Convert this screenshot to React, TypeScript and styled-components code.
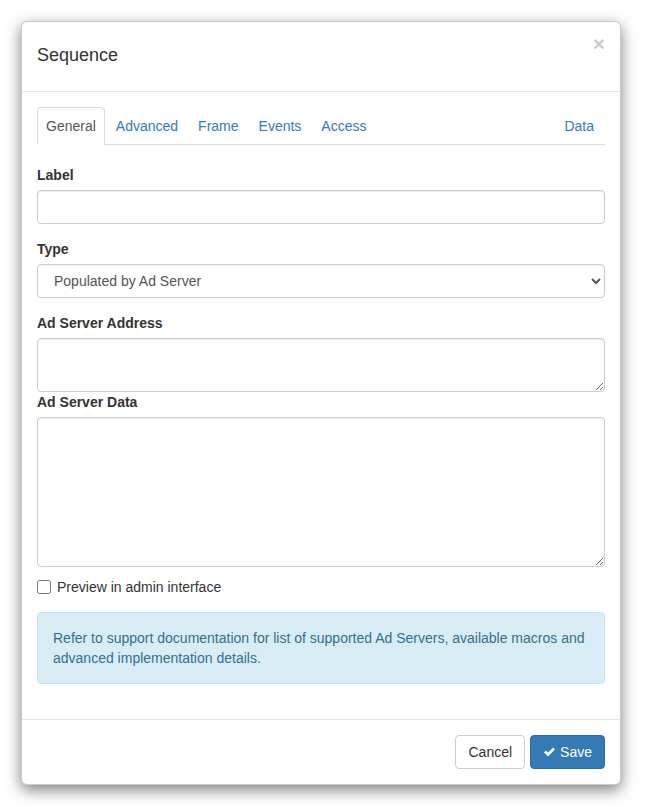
import React, { FC, useState } from "react";
import styled, { createGlobalStyle } from "styled-components";

const GlobalStyle = createGlobalStyle`
  html, body {
    margin: 0;
    padding: 0;
    background: #fff;
  }
  body {
    font-family: "Liberation Sans", Arial, Helvetica, sans-serif;
    font-size: 14px;
    line-height: 20px;
    color: #333;
  }
  * {
    box-sizing: border-box;
  }
`;

const Page = styled.div`
  padding: 21px 27px 26px 21px;
`;

const Modal = styled.div`
  width: 600px;
  background: #fff;
  border: 1px solid rgba(0, 0, 0, 0.2);
  border-radius: 6px;
  box-shadow: 0 5px 15px rgba(0, 0, 0, 0.5);
`;

const Header = styled.div`
  display: flex;
  align-items: flex-start;
  padding: 20px 15px 23px;
  border-bottom: 1px solid #e5e5e5;
`;

const Title = styled.h4`
  flex: 1;
  margin: 0;
  font-size: 18px;
  line-height: 26px;
  font-weight: 500;
  color: #333;
`;

const Close = styled.button`
  margin-top: -9px;
  padding: 0;
  border: 0;
  background: transparent;
  font-family: inherit;
  font-size: 21px;
  font-weight: bold;
  line-height: 1;
  color: #000;
  opacity: 0.2;
  text-shadow: 0 1px 0 #fff;
  cursor: pointer;
`;

const Body = styled.div`
  padding: 15px;
`;

const Tabs = styled.ul`
  display: flex;
  margin: 0 0 20px;
  padding: 0;
  list-style: none;
  border-bottom: 1px solid #ddd;
`;

const Tab = styled.li<{ $active?: boolean; $pushRight?: boolean }>`
  margin: 0 2px -1px 0;
  margin-left: ${(p) => (p.$pushRight ? "auto" : "0")};
  padding: 8px 8px;
  line-height: 20px;
  border: 1px solid ${(p) => (p.$active ? "#ddd" : "transparent")};
  border-bottom-color: transparent;
  border-radius: 4px 4px 0 0;
  background: ${(p) => (p.$active ? "#fff" : "transparent")};
  color: ${(p) => (p.$active ? "#555" : "#337ab7")};
  cursor: pointer;
`;

const FormGroup = styled.div<{ $tight?: boolean }>`
  margin-bottom: ${(p) => (p.$tight ? "0" : "15px")};
`;

const Label = styled.label`
  display: block;
  margin-bottom: 5px;
  font-weight: bold;
`;

const controlStyles = `
  display: block;
  width: 100%;
  padding: 6px 12px;
  font-family: inherit;
  font-size: 14px;
  line-height: 20px;
  color: #555;
  background: #fff;
  border: 1px solid #ccc;
  border-radius: 4px;
  box-shadow: inset 0 1px 1px rgba(0, 0, 0, 0.075);
  outline: none;
`;

const Input = styled.input`
  ${controlStyles}
  height: 34px;
`;

const Select = styled.select`
  ${controlStyles}
  height: 34px;
`;

const TextArea = styled.textarea<{ $height: number }>`
  ${controlStyles}
  height: ${(p) => p.$height}px;
  margin: 0;
  resize: vertical;
`;

const CheckRow = styled.label`
  display: flex;
  align-items: center;
  margin: 10px 0 15px;
  font-weight: normal;
  cursor: pointer;
`;

const CheckBox = styled.input`
  width: 14px;
  height: 14px;
  margin: 0 6px 0 0;
`;

const Alert = styled.div`
  margin-bottom: 20px;
  padding: 15px;
  color: #31708f;
  background: #d9edf7;
  border: 1px solid #bce8f1;
  border-radius: 4px;
`;

const Footer = styled.div`
  display: flex;
  justify-content: flex-end;
  gap: 5px;
  padding: 15px;
  border-top: 1px solid #e5e5e5;
`;

const Button = styled.button<{ $primary?: boolean }>`
  display: inline-flex;
  align-items: center;
  gap: 4px;
  height: 34px;
  padding: 6px 12px;
  font-family: inherit;
  font-size: 14px;
  line-height: 20px;
  border-radius: 4px;
  border: 1px solid ${(p) => (p.$primary ? "#2e6da4" : "#ccc")};
  background: ${(p) => (p.$primary ? "#337ab7" : "#fff")};
  color: ${(p) => (p.$primary ? "#fff" : "#333")};
  cursor: pointer;
`;

const CheckIcon: FC = () => (
  <svg width="13" height="12" viewBox="0 0 13 12" aria-hidden="true">
    <path d="M1 6.4 L2.9 4.5 L5 6.6 L10.1 1.5 L12 3.4 L5 10.4 Z" fill="#fff" />
  </svg>
);

const tabs = ["General", "Advanced", "Frame", "Events", "Access"];

const App: FC = () => {
  const [active, setActive] = useState("General");

  return (
    <Page>
      <GlobalStyle />
      <Modal>
        <Header>
          <Title>Sequence</Title>
          <Close aria-label="Close">×</Close>
        </Header>
        <Body>
          <Tabs>
            {tabs.map((t) => (
              <Tab key={t} $active={active === t} onClick={() => setActive(t)}>
                {t}
              </Tab>
            ))}
            <Tab $pushRight $active={active === "Data"} onClick={() => setActive("Data")}>
              Data
            </Tab>
          </Tabs>

          <FormGroup>
            <Label>Label</Label>
            <Input type="text" />
          </FormGroup>

          <FormGroup>
            <Label>Type</Label>
            <Select defaultValue="adserver">
              <option value="static">Static</option>
              <option value="adserver">Populated by Ad Server</option>
            </Select>
          </FormGroup>

          <FormGroup $tight>
            <Label>Ad Server Address</Label>
            <TextArea $height={54} />
          </FormGroup>

          <FormGroup $tight>
            <Label>Ad Server Data</Label>
            <TextArea $height={150} />
          </FormGroup>

          <CheckRow>
            <CheckBox type="checkbox" />
            Preview in admin interface
          </CheckRow>

          <Alert>
            Refer to support documentation for list of supported Ad Servers, available macros and
            advanced implementation details.
          </Alert>
        </Body>
        <Footer>
          <Button>Cancel</Button>
          <Button $primary>
            <CheckIcon />
            Save
          </Button>
        </Footer>
      </Modal>
    </Page>
  );
};

export default App;
